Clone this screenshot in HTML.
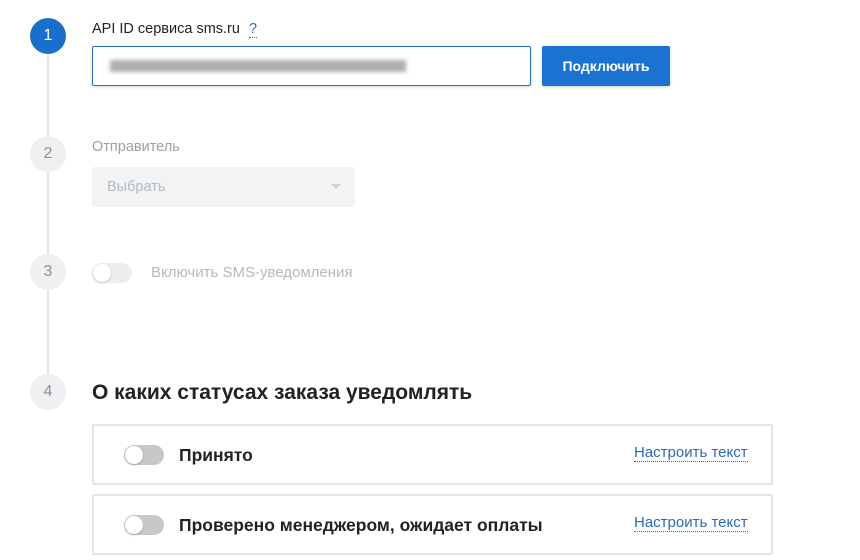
<!DOCTYPE html>
<html><head><meta charset="utf-8"><style>
body{margin:0;width:860px;height:560px;background:#fff;font-family:"Liberation Sans",sans-serif;position:relative;overflow:hidden}
.a{position:absolute}
.c{position:absolute;left:30px;width:36px;height:36px;border-radius:50%;background:#eef0f2;color:#8a9197;font-size:16px;text-align:center;line-height:36px}
.l{position:absolute;left:47px;width:2px;background:#e3e5e7}
.tg{position:absolute;width:40px;height:20px;border-radius:10px;background:#c6c8ca}
.tg:after{content:"";position:absolute;left:1px;top:1px;width:18px;height:18px;border-radius:50%;background:#fff;box-shadow:0 1px 2px rgba(0,0,0,.2)}
.box{position:absolute;left:92px;width:677px;height:57px;border:2px solid #e3e5e7;border-radius:2px}
.lk{position:absolute;left:540px;top:18px;color:#2a6bb8;font-size:15px;border-bottom:1px dotted #2a6bb8;line-height:17px}
.bt{position:absolute;left:85px;top:19px;font-size:17.5px;font-weight:bold;color:#222}
</style></head><body>
<div class="l" style="top:54px;height:82px"></div>
<div class="l" style="top:172px;height:82px"></div>
<div class="l" style="top:290px;height:84px"></div>
<div class="c" style="top:18px;background:#1a6fcc;color:#fff">1</div>
<div class="c" style="top:136px">2</div>
<div class="c" style="top:254px">3</div>
<div class="c" style="top:374px">4</div>
<div class="a" style="left:92px;top:21px;font-size:14.5px;color:#222">API ID сервиса sms.ru <span style="color:#2a6bb8;border-bottom:1px dotted #2a6bb8;margin-left:5px">?</span></div>
<div class="a" style="left:92px;top:46px;width:437px;height:38px;border:1px solid #2a6bb8;border-radius:2px;box-shadow:0 1px 3px rgba(0,0,0,.15)"></div>
<div class="a" style="left:110px;top:60px;width:296px;height:12px;background:#9a9a9a;filter:blur(2px);opacity:.8"></div>
<div class="a" style="left:542px;top:46px;width:128px;height:40px;background:#1a73d0;border-radius:2px;color:#fff;font-size:14px;font-weight:bold;text-align:center;line-height:40px;box-shadow:0 1px 3px rgba(0,0,0,.2)">Подключить</div>
<div class="a" style="left:92px;top:139px;font-size:14.5px;color:#9aa2a8">Отправитель</div>
<div class="a" style="left:92px;top:167px;width:263px;height:40px;background:#f2f3f4;border-radius:2px"></div>
<div class="a" style="left:107px;top:179px;font-size:14.5px;color:#b5babe">Выбрать</div>
<div class="a" style="left:331px;top:184px;border:5px solid transparent;border-top:5px solid #ccd0d3"></div>
<div class="tg" style="left:92px;top:263px;background:#eceef0"></div>
<div class="a" style="left:151px;top:264px;font-size:15px;color:#b5babe">Включить SMS-уведомления</div>
<div class="a" style="left:92px;top:381px;font-size:21px;font-weight:bold;color:#222">О каких статусах заказа уведомлять</div>
<div class="box" style="top:424px"><div class="tg" style="left:30px;top:19px"></div><div class="bt">Принято</div><div class="lk">Настроить текст</div></div>
<div class="box" style="top:494px"><div class="tg" style="left:30px;top:19px"></div><div class="bt">Проверено менеджером, ожидает оплаты</div><div class="lk">Настроить текст</div></div>
</body></html>
